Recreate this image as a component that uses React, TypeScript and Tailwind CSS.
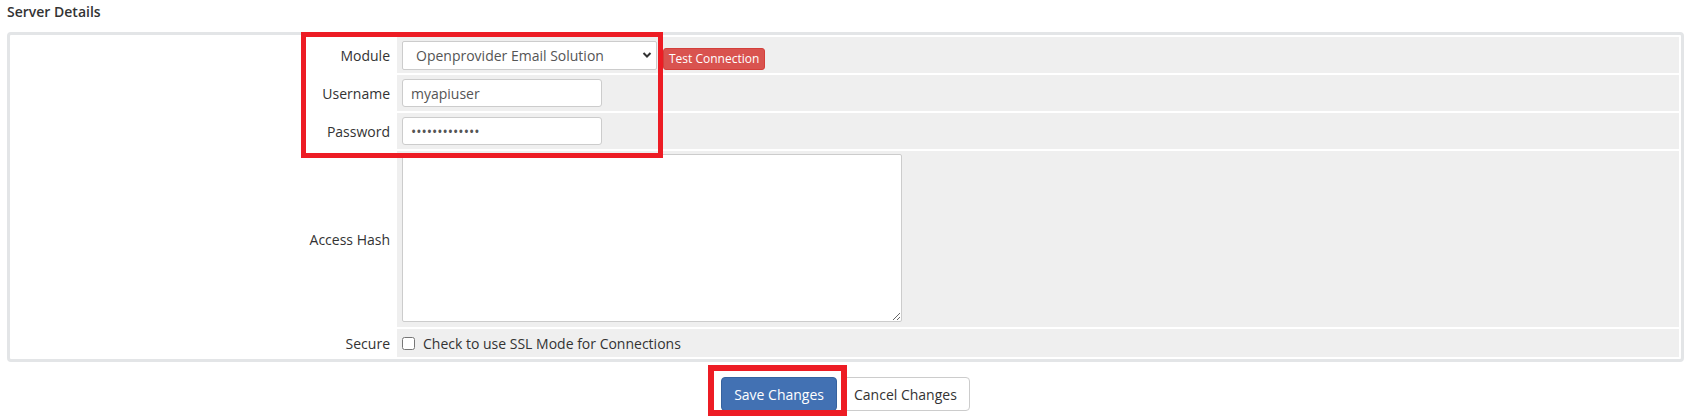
import React from "react";

function Row({
  label,
  children,
  tall = false,
  h,
}: {
  label: string;
  children: React.ReactNode;
  tall?: boolean;
  h: string;
}) {
  return (
    <>
      <div className={`flex items-center justify-end bg-white pr-[5px] text-[14px] text-[#333] ${h}`}>
        {label}
      </div>
      <div className={`flex bg-[#efefef] pl-[5px] ${tall ? "items-start pt-[3px]" : "items-center"} ${h}`}>
        {children}
      </div>
    </>
  );
}

export default function App() {
  return (
    <div
      className="relative h-[416px] w-[1691px] overflow-hidden bg-white px-[7px] pt-[2px]"
      style={{ fontFamily: '"Open Sans", "Noto Sans", Arial, sans-serif' }}
    >
      <h2 className="h-[20px] text-[14px] font-semibold leading-[20px] text-[#333]">Server Details</h2>

      <div className="mt-[10px] rounded-[4px] border-[3px] border-[#e3e5e7] p-[2px]">
        <div className="grid grid-cols-[383px_1fr] gap-[2px]">
          <Row label="Module" h="h-[36px]">
            <div className="flex items-end gap-[6px]">
              <div className="relative">
                <select
                  defaultValue="op"
                  className="h-[29px] w-[255px] appearance-none rounded-[2px] border border-[#ccc] bg-white pl-[13px] text-[14px] text-[#555] outline-none"
                >
                  <option value="op">Openprovider Email Solution</option>
                </select>
                <svg
                  className="pointer-events-none absolute right-[5px] top-[10px]"
                  width="10"
                  height="8"
                  viewBox="0 0 10 8"
                >
                  <path d="M1.5 2 L5 5.5 L8.5 2" fill="none" stroke="#333" strokeWidth="2" />
                </svg>
              </div>
              <button className="mb-[0px] h-[22px] rounded-[3px] border border-[#d43f3a] bg-[#d9534f] px-[5px] text-[12px] leading-[18px] text-white">
                Test Connection
              </button>
            </div>
          </Row>
          <Row label="Username" h="h-[36px]">
            <input
              defaultValue="myapiuser"
              className="h-[28px] w-[200px] rounded-[3px] border border-[#ccc] bg-white px-[8px] text-[14px] text-[#555] outline-none"
            />
          </Row>
          <Row label="Password" h="h-[36px]">
            <input
              type="password"
              defaultValue="abcdefghijklm"
              className="h-[28px] w-[200px] rounded-[3px] border border-[#ccc] bg-white px-[8px] text-[14px] text-[#555] outline-none"
            />
          </Row>
          <Row label="Access Hash" h="h-[176px]" tall>
            <textarea className="h-[168px] w-[500px] rounded-[2px] border border-[#ccc] bg-white outline-none" />
          </Row>
          <Row label="Secure" h="h-[28px]">
            <label className="flex items-center text-[14px] text-[#333]">
              <input type="checkbox" className="m-0 mr-[8px] h-[13px] w-[13px]" />
              Check to use SSL Mode for Connections
            </label>
          </Row>
        </div>
      </div>

      <div className="mt-[15px] flex justify-center gap-[4px]">
        <button className="h-[34px] rounded-[4px] border border-[#36629e] bg-[#4271b3] px-[12px] text-[14px] text-white">
          Save Changes
        </button>
        <button className="h-[34px] rounded-[4px] border border-[#ccc] bg-white px-[12px] text-[14px] text-[#333]">
          Cancel Changes
        </button>
      </div>

      {/* callout frames */}
      <div className="pointer-events-none absolute left-[301px] top-[32px] h-[126px] w-[362px] border-[5px] border-[#ed1c24]" />
      <div className="pointer-events-none absolute left-[708px] top-[365px] h-[51px] w-[139px] border-[6px] border-[#ed1c24]" />
    </div>
  );
}
